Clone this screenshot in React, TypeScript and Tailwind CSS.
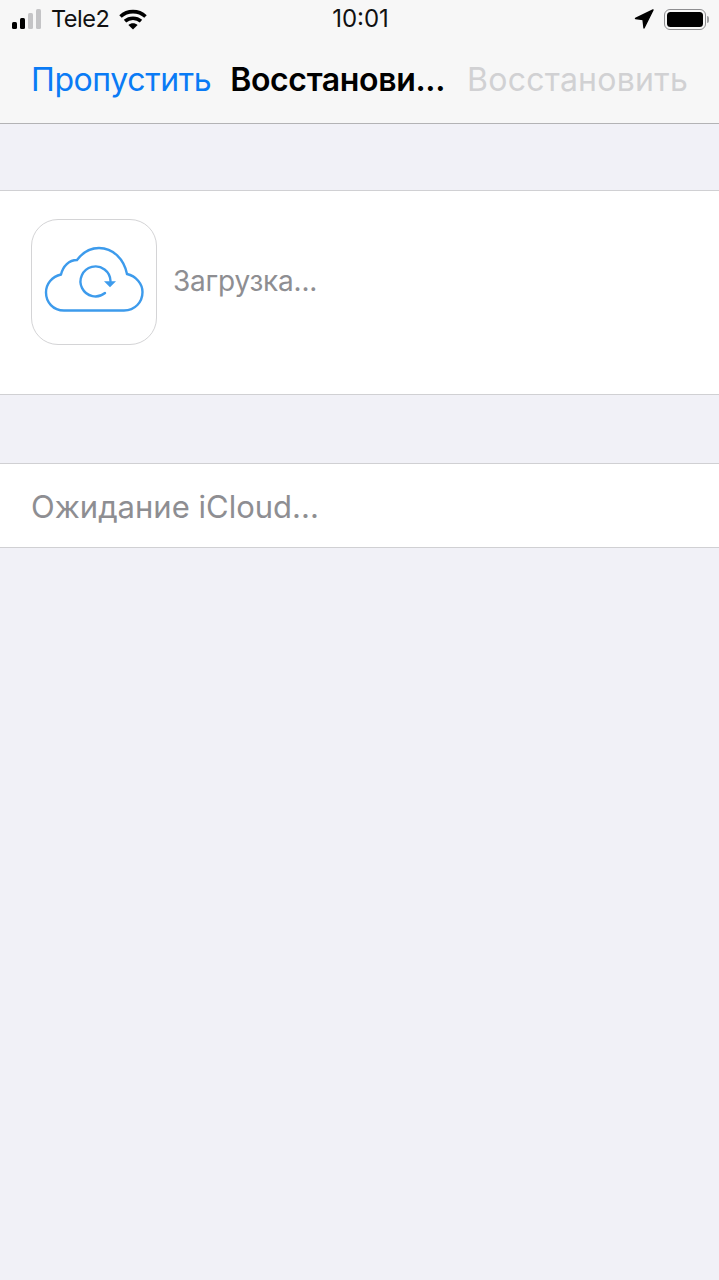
const FONT = 'font-["Inter","Roboto",sans-serif]'

function SignalBars() {
  return (
    <div className="flex h-[20px] items-end gap-[3px]">
      <div className="h-[7px] w-[5px] rounded-[1.5px] bg-black" />
      <div className="h-[11px] w-[5px] rounded-[1.5px] bg-black" />
      <div className="h-[16px] w-[5px] rounded-[1.5px] bg-[#c4c4c6]" />
      <div className="h-[20px] w-[5px] rounded-[1.5px] bg-[#c4c4c6]" />
    </div>
  )
}

function Wifi() {
  return (
    <svg width="28" height="21" viewBox="0 0 28 21" fill="none" stroke="#000" strokeWidth="3.6">
      <path d="M1.5 7.5C8.5 1 19.5 1 26.5 7.5" />
      <path d="M6 12.2C10.5 8.2 17.5 8.2 22 12.2" />
      <path d="M14 20.5L9.4 15.9C12 13.7 16 13.7 18.6 15.9Z" fill="#000" stroke="none" />
    </svg>
  )
}

function LocationArrow() {
  return (
    <svg width="20" height="20" viewBox="0 0 20 20">
      <path d="M19 1L1.5 9.5L9 10.5L10 19Z" fill="#000" stroke="#000" strokeWidth="1.4" strokeLinejoin="round" />
    </svg>
  )
}

function Battery() {
  return (
    <div className="flex items-center gap-[1px]">
      <div className="h-[21px] w-[42px] rounded-[6px] border-[1.5px] border-[#8e8e90] p-[2px]">
        <div className="h-full w-full rounded-[3.5px] bg-black" />
      </div>
      <div className="h-[7px] w-[2px] rounded-r-[2px] bg-[#a0a0a2]" />
    </div>
  )
}

function CloudIcon() {
  return (
    <svg width="126" height="126" viewBox="0 0 126 126" fill="none" stroke="#3d9bec" strokeWidth="2.4" strokeLinecap="round">
      <path d="M33 91.5C22 91.5 15 83 15 73.5C15 65 21 57.5 30 55.5C32 47 38 41 46 41C52 33 60 29 68 29C82 29 93 40 96 55C105 57 111.5 65 111.5 73C111.5 83 104 91.5 93 91.5Z" />
      <path d="M79.5 62A15 15 0 1 0 74 74" />
      <path d="M73 62.3H85L79 68.3Z" fill="#3d9bec" stroke="none" />
    </svg>
  )
}

export default function App() {
  return (
    <div className={`${FONT} flex h-[1280px] w-[719px] flex-col overflow-hidden bg-[#f1f1f7]`}>
      <header className="h-[124px] border-b border-[#b3b3b5] bg-[#f7f7f7]">
        <div className="grid h-[38px] grid-cols-3 items-center pl-[12px] pr-[10px]">
          <div className="flex items-center">
            <SignalBars />
            <span className="ml-[10px] text-[23.5px] tracking-[-0.5px] text-[#111]">Tele2</span>
            <span className="ml-[10px]"><Wifi /></span>
          </div>
          <div className="text-center text-[24px] text-[#111]">10:01</div>
          <div className="flex items-center justify-end gap-[10px]">
            <LocationArrow />
            <Battery />
          </div>
        </div>
        <div className="flex h-[85px] items-center pb-[1px] pl-[31px] pr-[31px] text-[32px]">
          <span className="tracking-[-0.4px] text-[#0a7bf5]">Пропустить</span>
          <span className="ml-[19px] font-semibold tracking-[-0.35px] text-black">Восстанови...</span>
          <span className="ml-auto tracking-[0.25px] text-[#d1d1d3]">Восстановить</span>
        </div>
      </header>

      <section className="mt-[66px] flex h-[205px] items-center border-y border-[#d0d0d3] bg-white pb-[22px] pl-[31px]">
        <div className="size-[126px] rounded-[27px] border border-[#d4d4d6] bg-white">
          <div className="-m-px"><CloudIcon /></div>
        </div>
        <span className="mb-[2px] ml-[16px] text-[28px] tracking-[-0.2px] text-[#8e8e92]">Загрузка...</span>
      </section>

      <section className="mt-[68px] flex h-[85px] items-center border-y border-[#d0d0d3] bg-white pl-[31px]">
        <span className="pt-[3px] text-[31px] text-[#8e8e92]">Ожидание iCloud...</span>
      </section>
    </div>
  )
}
